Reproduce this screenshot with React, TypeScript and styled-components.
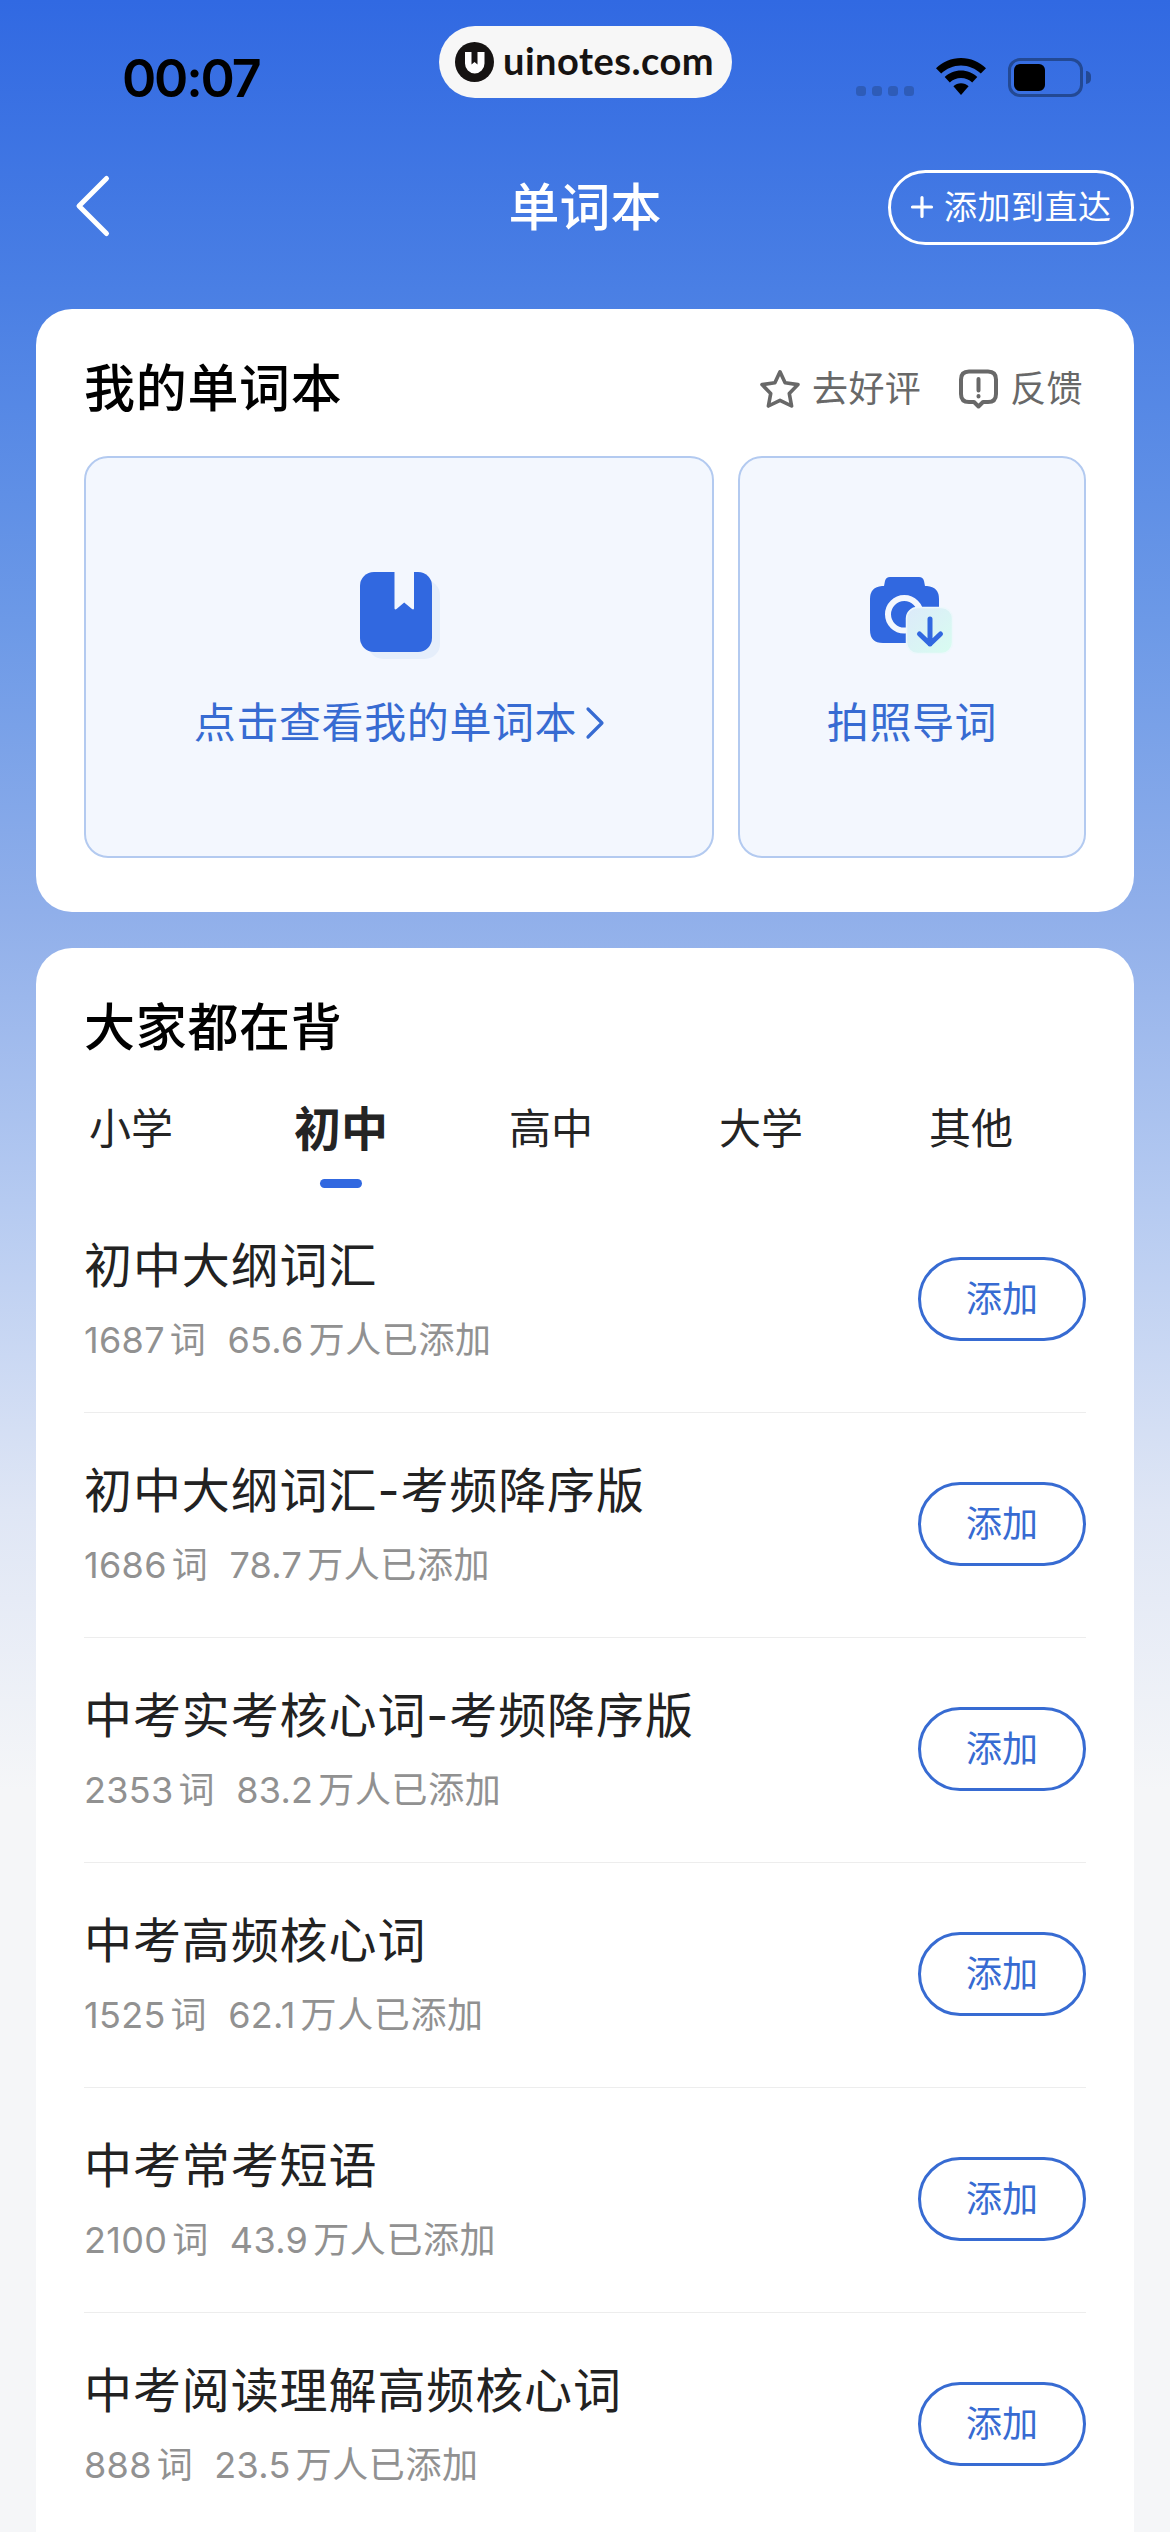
import React from "react";
import styled, { createGlobalStyle } from "styled-components";

const BLUE = "#3168e0";
const LINK = "#376bd2";

const GlobalStyle = createGlobalStyle`
  * { box-sizing: border-box; }
  html, body { margin: 0; padding: 0; }
  body { width: 1170px; height: 2532px; overflow: hidden; }
  svg { display: block; flex: none; overflow: visible; }
  button { font: inherit; background: none; padding: 0; margin: 0; }
`;

const Screen = styled.main`
  width: 1170px;
  height: 2532px;
  overflow: hidden;
  display: flex;
  flex-direction: column;
  font-family: Inter, "Noto Sans CJK SC", sans-serif;
  background: linear-gradient(
    180deg,
    #3169e2 0px,
    #4a7fe4 290px,
    #6c99e7 620px,
    #90afea 912px,
    #b5caf1 1200px,
    #dfe6f5 1510px,
    #f5f6f8 1790px,
    #f5f6f8 100%
  );
`;

const StatusBar = styled.header`
  flex: none;
  height: 156px;
  padding: 26px 79px 0 122px;
  display: grid;
  grid-template-columns: 317px 293px 1fr;
  align-items: start;
`;

const Clock = styled.time`
  padding-top: 21px;
  font-size: 52px;
  line-height: 64px;
  font-weight: 600;
  letter-spacing: -2.2px;
  color: #000;
`;

const SitePill = styled.div`
  height: 72px;
  border-radius: 36px;
  background: #f7f7f7;
  display: flex;
  align-items: center;
  gap: 9px;
  padding-left: 16px;
  font-family: Lato, sans-serif;
  font-size: 38px;
  letter-spacing: 0.5px;
  line-height: 68px;
  font-weight: 700;
  color: #161312;
`;

const SiteName = styled.span`
  height: 72px;
`;

const StatusIcons = styled.div`
  height: 72px;
  padding-top: 32px;
  display: flex;
  justify-content: flex-end;
  align-items: flex-start;
`;

const SignalDots = styled.div`
  display: flex;
  gap: 6px;
  padding-top: 28px;
  margin-right: 22px;
`;

const SignalDot = styled.i`
  width: 10px;
  height: 10px;
  border-radius: 3.5px;
  background: #2e5cb8;
`;

const Battery = styled.div`
  display: flex;
  align-items: center;
  gap: 3px;
  margin-left: 22px;
  height: 39px;
`;

const BatteryShell = styled.div`
  width: 75px;
  height: 39px;
  border: 3px solid #234994;
  border-radius: 12px;
  padding: 3px;
`;

const BatteryLevel = styled.div`
  width: 31px;
  height: 27px;
  border-radius: 6px;
  background: #000;
`;

const BatteryNub = styled.div`
  width: 5px;
  height: 13px;
  border-radius: 0 5px 5px 0;
  background: #234994;
`;

const NavBar = styled.nav`
  flex: none;
  height: 153px;
  padding: 14px 36px 0 76px;
  display: grid;
  grid-template-columns: 1fr auto 1fr;
  align-items: start;
`;

const BackButton = styled.button`
  border: 0;
  height: 72px;
  display: flex;
  align-items: center;
`;

const NavTitle = styled.h1`
  margin: 0 40px 0 0;
  font-size: 51px;
  line-height: 75px;
  font-weight: 500;
  color: #fff;
`;

const ShortcutButton = styled.button`
  justify-self: end;
  width: 246px;
  height: 75px;
  border: 3px solid #fff;
  border-radius: 38px;
  display: flex;
  align-items: center;
  gap: 11px;
  padding-left: 20px;
  font-size: 33px;
  letter-spacing: 0.5px;
  line-height: 69px;
  color: #fff;
  white-space: nowrap;
`;

const Content = styled.div`
  flex: none;
  padding: 0 36px;
  display: flex;
  flex-direction: column;
  gap: 36px;
`;

const Card = styled.section<{ $height: number }>`
  height: ${(p) => p.$height}px;
  flex: none;
  padding: 41px 48px 0;
  border-radius: 36px;
  background: #fff;
`;

const CardHead = styled.div`
  height: 78px;
  display: flex;
  justify-content: space-between;
  align-items: center;
`;

const CardTitle = styled.h2`
  margin: 0;
  font-size: 51px;
  line-height: 78px;
  letter-spacing: 0.7px;
  font-weight: 500;
  color: #000;
`;

const CardActions = styled.div`
  display: flex;
  gap: 38px;
  padding-right: 3px;
`;

const CardAction = styled.button`
  border: 0;
  display: flex;
  align-items: center;
  gap: 12px;
  font-size: 36px;
  letter-spacing: 0.4px;
  line-height: 54px;
  color: #686868;
`;

const Tiles = styled.div`
  margin-top: 28px;
  display: grid;
  grid-template-columns: 630px 348px;
  gap: 24px;
`;

const Tile = styled.button`
  height: 402px;
  border: 2px solid #b3caf0;
  border-radius: 24px;
  background: #f3f7fe;
  display: flex;
  flex-direction: column;
  align-items: center;
  padding-top: 114px;
  gap: 32px;
`;

const TileIcon = styled.span`
  height: 88px;
  display: flex;
  align-items: center;
`;

const TileLabel = styled.span`
  display: flex;
  align-items: center;
  gap: 9px;
  font-size: 42px;
  letter-spacing: 0.6px;
  line-height: 62px;
  color: ${LINK};
`;

const Tabs = styled.div`
  height: 121px;
  margin-left: -58px;
  display: grid;
  grid-template-columns: repeat(5, 210px);
`;

const Tab = styled.button<{ $active?: boolean }>`
  border: 0;
  height: 121px;
  display: flex;
  flex-direction: column;
  justify-content: flex-start;
  align-items: center;
  font-size: ${(p) => (p.$active ? 47 : 42)}px;
  font-weight: ${(p) => (p.$active ? 700 : 400)};
  line-height: 124px;
  color: #242424;
  &::after {
    content: "";
    flex: none;
    width: 42px;
    height: 9px;
    margin-top: -12px;
    border-radius: 4.5px;
    background: ${(p) => (p.$active ? BLUE : "transparent")};
  }
`;

const WordList = styled.ul`
  list-style: none;
  margin: 0;
  padding: 0;
`;

const WordRow = styled.li`
  height: 225px;
  border-bottom: 1px solid #ededed;
  display: flex;
  justify-content: space-between;
  padding-top: 42px;
`;

const WordTitle = styled.h3`
  margin: 0;
  font-size: 48px;
  letter-spacing: 0.9px;
  line-height: 72px;
  font-weight: 400;
  color: #222;
`;

const WordMeta = styled.p`
  margin: 11px 0 0;
  display: flex;
  gap: 21px;
  font-size: 36px;
  line-height: 54px;
  color: #919191;
`;

const Stat = styled.span`
  display: flex;
  gap: 5px;
  letter-spacing: 0.6px;
`;

const StatValue = styled.span`
  letter-spacing: 0.3px;
`;

const AddButton = styled.button`
  width: 168px;
  height: 84px;
  margin-top: 27px;
  border: 3px solid ${LINK};
  border-radius: 42px;
  font-size: 36px;
  line-height: 76px;
  color: ${LINK};
`;

const SiteLogo = () => (
  <svg width="39" height="40" viewBox="0 0 39 40">
    <ellipse cx="19.5" cy="20" rx="19.5" ry="20" fill="#161312" />
    <path d="M10 10H16.500V22.500L19.500 20L22.500 22.500V10H29.500V21.500A9.750 10 0 0 1 10 21.500Z" fill="#fff" />
  </svg>
);

const WifiIcon = () => (
  <svg width="50" height="37" viewBox="0 0 50 37" fill="#000">
    <path d="M25 0C34.600 0 43.500 3.800 50 10.200L44.800 15.600C39.500 10.500 32.500 7.500 25 7.500S10.500 10.500 5.200 15.600L0 10.200C6.500 3.800 15.400 0 25 0z" />
    <path d="M25 12.500C31.200 12.500 37 15 41.300 19L36.200 24.500C33.200 21.700 29.300 20 25 20S16.800 21.700 13.800 24.500L8.700 19C13 15 18.800 12.500 25 12.500z" />
    <path d="M25 25.200C27.900 25.200 30.600 26.400 32.600 28.300L25 37L17.400 28.300C19.400 26.400 22.100 25.200 25 25.200z" />
  </svg>
);

const BackIcon = () => (
  <svg width="33" height="60" viewBox="0 0 33 60" fill="none" stroke="#fff" strokeWidth="5" strokeLinecap="round" strokeLinejoin="round">
    <path d="M30.500 2.500L3 30L30.500 57.500" />
  </svg>
);

const PlusIcon = () => (
  <svg width="22" height="22" viewBox="0 0 22 22" stroke="#fff" strokeWidth="3.200" strokeLinecap="round">
    <path d="M1.500 10H20.500M11 0.500V19.500" />
  </svg>
);

const StarIcon = () => (
  <svg width="40" height="38" viewBox="0 0 40 38" fill="none" stroke="#686868" strokeWidth="3.600" strokeLinejoin="round">
    <path d="M20 1.800L25.100 12.800L38 14.600L29.300 23.600L31.600 36L20 30.300L8.400 36L10.700 23.600L2 14.600L14.900 12.800Z" />
  </svg>
);

const FeedbackIcon = () => (
  <svg width="39" height="40" viewBox="0 0 39 40" fill="none" stroke="#686868" strokeLinecap="round" strokeLinejoin="round">
    <path strokeWidth="4" d="M10 2.500H29Q37 2.500 37 10.500V25Q37 33 29 33H24L19.500 37.500L15 33H10Q2 33 2 25V10.500Q2 2.500 10 2.500Z" />
    <path strokeWidth="4" d="M19.500 10V21.500M19.500 27V27.500" />
  </svg>
);

const BookIcon = () => (
  <svg width="79" height="88" viewBox="0 0 79 88">
    <rect x="8" y="8" width="72" height="79" rx="15" fill="#e5eefb" />
    <rect width="72" height="80" rx="14" fill={BLUE} />
    <path d="M34.500 0H54V36.500Q53.500 38 52 37L44.200 30.500L36.500 37Q35 38 34.500 36.500Z" fill="#f3f7fe" />
  </svg>
);

const CameraIcon = () => (
  <svg width="84" height="78" viewBox="0 0 84 78">
    <defs>
      <linearGradient id="badge" x1="0" y1="0" x2="1" y2="1">
        <stop offset="0" stopColor="#dceafa" />
        <stop offset="1" stopColor="#d8fdf0" />
      </linearGradient>
    </defs>
    <path d="M20 0H49Q53 0 54 4L55 9H57Q69 10 69 22V53Q69 66 56 66H13Q0 66 0 53V22Q0 10 12 9H14L15 4Q16 0 20 0Z" fill={BLUE} />
    <circle cx="34.300" cy="37.300" r="16.300" fill="none" stroke="#f3f7fe" strokeWidth="6" />
    <rect x="36.500" y="30.500" width="46" height="46" rx="11" fill="url(#badge)" stroke="#edf8fc" strokeWidth="1.500" />
    <path d="M60 42V67M49.500 57L60 67L70.500 57" fill="none" stroke={BLUE} strokeWidth="5" strokeLinecap="round" strokeLinejoin="round" />
  </svg>
);

const ArrowIcon = () => (
  <svg width="18" height="32" viewBox="0 0 18 32" fill="none" stroke={LINK} strokeWidth="3.200" strokeLinecap="round" strokeLinejoin="round">
    <path d="M2 2L16 16L2 30" />
  </svg>
);

const tabs = ["小学", "初中", "高中", "大学", "其他"];

const books = [
  { title: "初中大纲词汇", words: "1687", added: "65.6" },
  { title: "初中大纲词汇-考频降序版", words: "1686", added: "78.7" },
  { title: "中考实考核心词-考频降序版", words: "2353", added: "83.2" },
  { title: "中考高频核心词", words: "1525", added: "62.1" },
  { title: "中考常考短语", words: "2100", added: "43.9" },
  { title: "中考阅读理解高频核心词", words: "888", added: "23.5" },
];

export default function App() {
  return (
    <Screen lang="zh-CN">
      <GlobalStyle />
      <StatusBar>
        <Clock>00:07</Clock>
        <SitePill>
          <SiteLogo />
          <SiteName>uinotes.com</SiteName>
        </SitePill>
        <StatusIcons>
          <SignalDots>
            <SignalDot />
            <SignalDot />
            <SignalDot />
            <SignalDot />
          </SignalDots>
          <WifiIcon />
          <Battery>
            <BatteryShell>
              <BatteryLevel />
            </BatteryShell>
            <BatteryNub />
          </Battery>
        </StatusIcons>
      </StatusBar>
      <NavBar>
        <BackButton aria-label="返回">
          <BackIcon />
        </BackButton>
        <NavTitle>单词本</NavTitle>
        <ShortcutButton>
          <PlusIcon />
          添加到直达
        </ShortcutButton>
      </NavBar>
      <Content>
        <Card $height={603}>
          <CardHead>
            <CardTitle>我的单词本</CardTitle>
            <CardActions>
              <CardAction>
                <StarIcon />
                去好评
              </CardAction>
              <CardAction>
                <FeedbackIcon />
                反馈
              </CardAction>
            </CardActions>
          </CardHead>
          <Tiles>
            <Tile>
              <TileIcon>
                <BookIcon />
              </TileIcon>
              <TileLabel>
                点击查看我的单词本
                <ArrowIcon />
              </TileLabel>
            </Tile>
            <Tile>
              <TileIcon>
                <CameraIcon />
              </TileIcon>
              <TileLabel>拍照导词</TileLabel>
            </Tile>
          </Tiles>
        </Card>
        <Card $height={1650}>
          <CardHead>
            <CardTitle>大家都在背</CardTitle>
          </CardHead>
          <Tabs>
            {tabs.map((name) => (
              <Tab key={name} $active={name === "初中"}>
                {name}
              </Tab>
            ))}
          </Tabs>
          <WordList>
            {books.map((book) => (
              <WordRow key={book.title}>
                <div>
                  <WordTitle>{book.title}</WordTitle>
                  <WordMeta>
                    <Stat>
                      <StatValue>{book.words}</StatValue>
                      <span>词</span>
                    </Stat>
                    <Stat>
                      <StatValue>{book.added}</StatValue>
                      <span>万人已添加</span>
                    </Stat>
                  </WordMeta>
                </div>
                <AddButton>添加</AddButton>
              </WordRow>
            ))}
          </WordList>
        </Card>
      </Content>
    </Screen>
  );
}
